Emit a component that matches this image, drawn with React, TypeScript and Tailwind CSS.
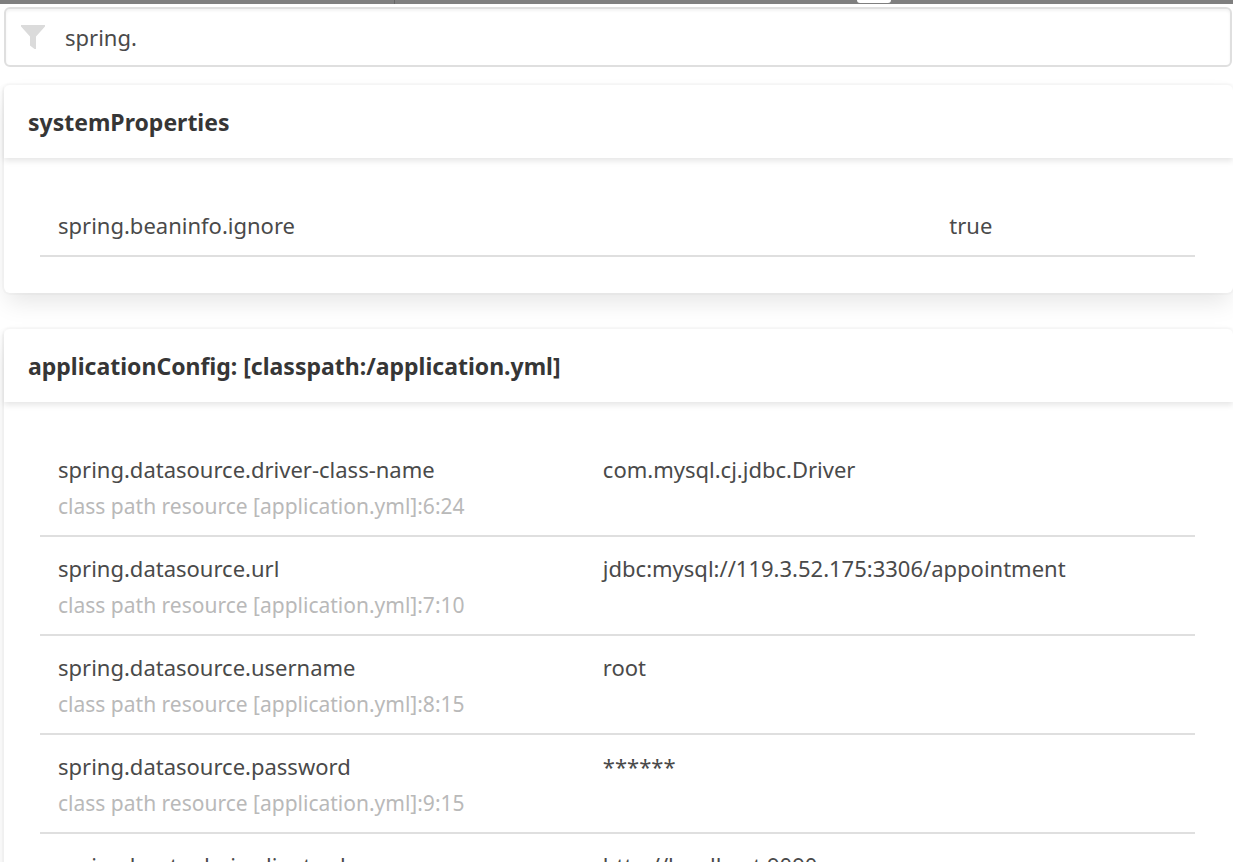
import { useState } from "react";

type Property = { name: string; value: string; origin?: string };
type Source = { title: string; nameColumn: string; properties: Property[] };

const sources: Source[] = [
  {
    title: "systemProperties",
    nameColumn: "w-[77%]",
    properties: [{ name: "spring.beaninfo.ignore", value: "true" }],
  },
  {
    title: "applicationConfig: [classpath:/application.yml]",
    nameColumn: "w-[47%]",
    properties: [
      {
        name: "spring.datasource.driver-class-name",
        value: "com.mysql.cj.jdbc.Driver",
        origin: "class path resource [application.yml]:6:24",
      },
      {
        name: "spring.datasource.url",
        value: "jdbc:mysql://119.3.52.175:3306/appointment",
        origin: "class path resource [application.yml]:7:10",
      },
      {
        name: "spring.datasource.username",
        value: "root",
        origin: "class path resource [application.yml]:8:15",
      },
      {
        name: "spring.datasource.password",
        value: "******",
        origin: "class path resource [application.yml]:9:15",
      },
      {
        name: "spring.boot.admin.client.url",
        value: "http://localhost:9090",
      },
    ],
  },
];

function FilterIcon() {
  return (
    <svg viewBox="0 0 24 24" className="h-6 w-6 shrink-0 fill-[#dbdbdb]" aria-hidden="true">
      <path d="M0 0h24v1.500L15 11.500V24h-1.500L9 20.500V11.500L0 1.500z" />
    </svg>
  );
}

function SourceCard({ source }: { source: Source }) {
  return (
    <section className="rounded-md bg-white shadow-[0_12px_24px_-3px_rgba(10,10,10,0.1),0_0_0_2px_rgba(10,10,10,0.02)]">
      <header className="px-6 pt-[19px] pb-[17px] shadow-[0_3px_6px_rgba(10,10,10,0.1)]">
        <h2 className="text-[23px] leading-[37px] font-bold text-[#363636]">{source.title}</h2>
      </header>
      <div className="pt-9 pr-[38px] pb-9 pl-9">
        <table className="w-full table-fixed text-left text-[22px] leading-[37px] text-[#4a4a4a]">
          <tbody>
            {source.properties.map((property) => (
              <tr key={property.name} className="border-b-2 border-[#dfdfdf] align-top">
                <th scope="row" className={`${source.nameColumn} pt-[13px] pr-4 pb-[11px] pl-[18px] font-normal`}>
                  {property.name}
                  {property.origin && (
                    <small className="block text-[21px] leading-[36px] text-[#b9b9b9]">
                      {property.origin}
                    </small>
                  )}
                </th>
                <td className="pt-[13px] pr-4 pb-[11px] pl-5">{property.value}</td>
              </tr>
            ))}
          </tbody>
        </table>
      </div>
    </section>
  );
}

export default function App() {
  const [filter, setFilter] = useState("spring.");
  return (
    <div className="h-screen overflow-hidden bg-white font-['Noto_Sans',sans-serif]">
      <div className="flex h-1 bg-[#7f7f7f]">
        <div className="w-[32%] border-r border-[#666666]" />
        <div className="w-[37.5%]" />
        <div className="h-[3px] w-[34px] rounded-b-md bg-white" />
      </div>
      <main className="flex flex-col pt-[3px] pl-1">
        <label className="mr-px mb-[18px] flex h-[60px] items-center gap-5 rounded-md border-2 border-[#dfdfdf] px-[15px] shadow-[inset_0_2px_3px_rgba(10,10,10,0.05)]">
          <FilterIcon />
          <input
            type="text"
            aria-label="Filter properties"
            value={filter}
            onChange={(event) => setFilter(event.target.value)}
            className="min-w-0 flex-1 bg-transparent text-[22px] leading-9 text-[#4a4a4a] outline-none"
          />
        </label>
        <div className="flex flex-col gap-9">
          {sources.map((source) => (
            <SourceCard key={source.title} source={source} />
          ))}
        </div>
      </main>
    </div>
  );
}
